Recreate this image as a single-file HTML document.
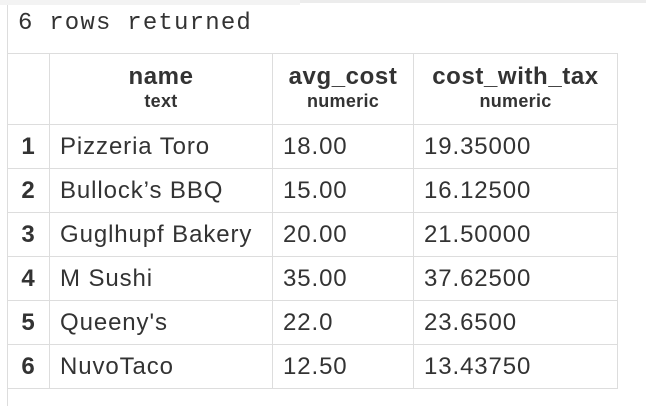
<!DOCTYPE html>
<html><head><style>
html,body{margin:0;padding:0;background:#fff;width:646px;height:406px;overflow:hidden;position:relative;font-family:"Liberation Sans",Arial,sans-serif;color:#333}
.top{position:absolute;left:0;top:0;width:646px;height:3px;background:#ececec}
.top2{position:absolute;left:0;top:0;width:300px;height:5px;background:#f3f3f3}
.lb{position:absolute;left:7px;top:5px;width:1px;height:401px;background:#ddd}
.cap{position:absolute;left:18px;top:10px;font-family:"Liberation Mono",monospace;font-size:24px;letter-spacing:1.2px;color:#333}
table{position:absolute;left:7px;top:53px;border-collapse:collapse}
td,th{border:1px solid #ddd;padding:0 0 0 10px;height:43px;font-size:24px;letter-spacing:0.9px;text-align:left;white-space:nowrap}
th{text-align:center;padding:0;height:70px;line-height:25px;font-weight:bold;letter-spacing:0.6px}
th small{font-size:18px;display:block;letter-spacing:0.3px}
td.n{font-weight:bold;text-align:center;padding:0}
</style></head><body>
<div class="top"></div><div class="top2"></div>
<div class="lb"></div>
<div class="cap">6 rows returned</div>
<table>
<colgroup><col style="width:42px"><col style="width:223px"><col style="width:141px"><col style="width:204px"></colgroup>
<tr><th></th><th>name<small>text</small></th><th>avg_cost<small>numeric</small></th><th>cost_with_tax<small>numeric</small></th></tr>
<tr><td class="n">1</td><td>Pizzeria Toro</td><td>18.00</td><td>19.35000</td></tr>
<tr><td class="n">2</td><td>Bullock’s BBQ</td><td>15.00</td><td>16.12500</td></tr>
<tr><td class="n">3</td><td>Guglhupf Bakery</td><td>20.00</td><td>21.50000</td></tr>
<tr><td class="n">4</td><td>M Sushi</td><td>35.00</td><td>37.62500</td></tr>
<tr><td class="n">5</td><td>Queeny's</td><td>22.0</td><td>23.6500</td></tr>
<tr><td class="n">6</td><td>NuvoTaco</td><td>12.50</td><td>13.43750</td></tr>
</table>
</body></html>
